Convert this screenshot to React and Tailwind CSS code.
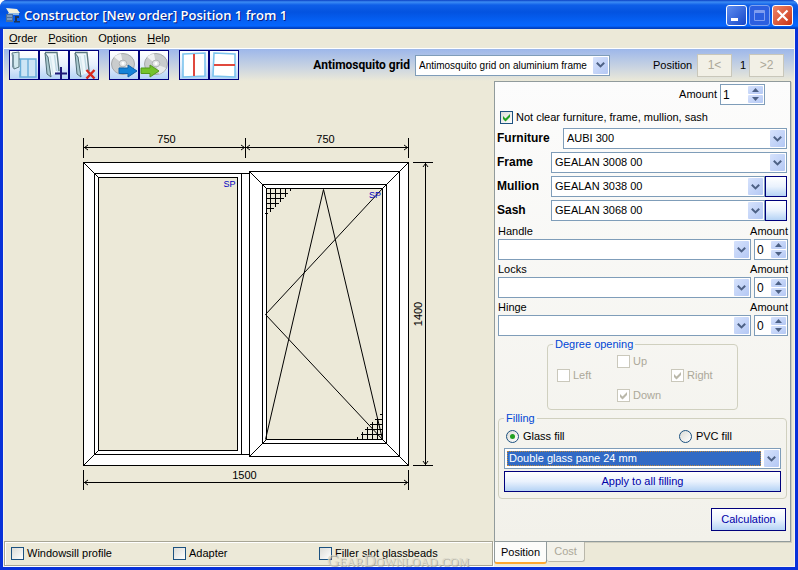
import React, { useId, useState } from "react";

const cx = (...parts) => parts.filter(Boolean).join(" ");

function Chevron({ className }) {
  return (
    <svg viewBox="0 0 9 6" className={cx("h-[6px] w-[9px]", className)} fill="none" stroke="#4d6185" strokeWidth="2">
      <path d="M0.8 0.8 L4.5 4.4 L8.2 0.8" />
    </svg>
  );
}

function Combo({ id, value, label, className, selected, small }) {
  return (
    <div className={cx("relative flex h-[21px] min-w-0 border border-[#7f9db9] bg-white", className)}>
      <select
        id={id}
        aria-label={label}
        defaultValue={value}
        className={cx(
          "min-w-0 flex-1 appearance-none overflow-hidden leading-[13px] outline-none",
          small ? "text-[10px]" : "text-[11px]",
          selected ? "my-[2px] mr-[19px] ml-[2px] border border-dotted border-[#c08a3c] bg-[#316ac5] pl-px text-white" : "mr-[17px] bg-white pl-[3px] text-black"
        )}
      >
        <option value={value}>{value}</option>
      </select>
      <span className="pointer-events-none absolute inset-y-px right-px flex w-[15px] items-center justify-center rounded-[1px] bg-gradient-to-br from-[#d6e2fc] to-[#b4c8f4]">
        <Chevron />
      </span>
    </div>
  );
}

function Spinner({ id, initial, className }) {
  const [n, setN] = useState(initial);
  const step = "flex h-[8px] w-[15px] items-center justify-center rounded-[1px] bg-gradient-to-br from-[#d6e2fc] to-[#b4c8f4]";
  return (
    <div className={cx("flex h-[21px] border border-[#7f9db9] bg-white p-px", className)}>
      <input
        id={id}
        value={n}
        inputMode="numeric"
        onChange={(e) => setN(Number(e.target.value) || 0)}
        className="w-0 min-w-0 flex-1 pl-px text-[12px] leading-[14px] outline-none"
      />
      <div className="flex flex-col gap-px">
        <button type="button" aria-label="Increase" className={step} onClick={() => setN(n + 1)}>
          <svg viewBox="0 0 7 4" className="h-[4px] w-[7px]" fill="#4d6185"><path d="M0 4 L3.5 0 L7 4Z" /></svg>
        </button>
        <button type="button" aria-label="Decrease" className={step} onClick={() => setN(Math.max(0, n - 1))}>
          <svg viewBox="0 0 7 4" className="h-[4px] w-[7px]" fill="#4d6185"><path d="M0 0 L3.5 4 L7 0Z" /></svg>
        </button>
      </div>
    </div>
  );
}

function Check({ label, checked, disabled, className }) {
  const [on, setOn] = useState(!!checked);
  return (
    <label className={cx("flex items-center gap-[3px]", disabled && "text-[#aca899]", className)}>
      <span className="relative flex h-[13px] w-[13px]">
        <input
          type="checkbox"
          checked={on}
          disabled={disabled}
          onChange={() => setOn(!on)}
          className={cx(
            "h-[13px] w-[13px] appearance-none border",
            disabled ? "border-[#cac8bb] bg-white" : "border-[#1c5180] bg-gradient-to-br from-[#dcdcd7] to-white"
          )}
        />
        {on && (
          <svg viewBox="0 0 13 13" className="pointer-events-none absolute inset-0" fill={disabled ? "#bab8aa" : "#21a121"}>
            <path d="M3 5 L5.5 7.5 L10 3 V6 L5.5 10.5 L3 8Z" />
          </svg>
        )}
      </span>
      {label}
    </label>
  );
}

function Radio({ label, checked }) {
  return (
    <label className="flex items-center gap-[4px]">
      <span className="relative flex h-[13px] w-[13px]">
        <input
          type="radio"
          name="filling"
          defaultChecked={checked}
          className="peer h-[13px] w-[13px] appearance-none rounded-full border border-[#1c5180] bg-gradient-to-br from-[#dcdcd7] to-white"
        />
        <span className="pointer-events-none absolute inset-[4px] hidden rounded-full bg-[#21a121] peer-checked:block" />
      </span>
      {label}
    </label>
  );
}

function BlueButton({ children, label, className }) {
  return (
    <button
      type="button"
      aria-label={label}
      className={cx("border border-[#00007c] bg-gradient-to-b from-white via-[#eaf2fd] to-[#b5d3f5] text-[#0000a8]", className)}
    >
      {children}
    </button>
  );
}

function ToolButton({ label, children }) {
  return (
    <button
      type="button"
      aria-label={label}
      className="h-[30px] w-[30px] border border-[#00007c] bg-gradient-to-b from-white via-[#e6effc] to-[#b5d3f5]"
    >
      <svg viewBox="0 0 28 28" className="h-[28px] w-[28px]" fill="none">{children}</svg>
    </button>
  );
}

function OpenSash() {
  return (
    <g>
      <path d="M5 2 H17 V22 L9 25Z" fill="#eef7fa" />
      <path d="M5 2 L8 6 L11 26 L7 23Z" fill="#a9c8cf" stroke="#4e6b74" />
      <path d="M5 1.5 H17 L19 20" stroke="#5d7a80" strokeWidth="1.4" />
      <path d="M14.5 4 L16.5 20" stroke="#bcd8e2" strokeWidth="1.4" />
      <path d="M10 5 L13 23" stroke="#d5e8ee" strokeWidth="1.4" />
    </g>
  );
}

function Disc({ x }) {
  return (
    <g>
      <ellipse cx={x} cy="13" rx="11.5" ry="10.5" fill="#c9cccd" stroke="#a5a9ab" />
      <path d={`M${x} 13 L${x - 9} 6 A11.5 10.5 0 0 1 ${x - 2} 2.7Z`} fill="#f1f2f2" />
      <path d={`M${x} 13 L${x + 10} 17 A11.5 10.5 0 0 1 ${x + 3} 23Z`} fill="#e8eaea" />
      <ellipse cx={x} cy="12.5" rx="3.8" ry="3.4" fill="#e3e5e6" stroke="#b0b3b5" />
      <circle cx={x} cy="12.5" r="1.4" fill="#fff" />
    </g>
  );
}

function Toolbar() {
  return (
    <div className="flex h-[32px] items-center bg-gradient-to-b from-[#9db7ea] to-[#ece9d8] pr-[10px] pl-[5px]">
      <div className="flex gap-[10px]">
        <div className="flex">
          <ToolButton label="Construction">
            <path d="M9 8 H26 V26 H10 V20" fill="#cde5f5" stroke="#68add8" strokeWidth="1.4" />
            <path d="M10.5 8 V26 M18 8 V26" stroke="#68add8" strokeWidth="1.4" />
            <path d="M2 2 L9 1 V16 L4 18Z" fill="#d3e9ef" stroke="#58777f" />
            <path d="M2 2 L4 4 V18 L2 16Z" fill="#7893a0" />
          </ToolButton>
          <ToolButton label="Add sash">
            <OpenSash />
            <path d="M21 16 V28 M15 22.5 H27" stroke="#1d1878" strokeWidth="2" />
          </ToolButton>
          <ToolButton label="Delete sash">
            <OpenSash />
            <path d="M16.5 19 L24.5 27.5 M24.5 19 L16.5 27.5" stroke="#d8281c" strokeWidth="2.4" />
          </ToolButton>
        </div>
        <div className="flex">
          <ToolButton label="Save to disc">
            <Disc x={13} />
            <path d="M9 17 H18 V14 L27 20 L18 26 V22.5 H9Z" fill="#1583d8" stroke="#0f62ac" />
          </ToolButton>
          <ToolButton label="Load from disc">
            <Disc x={16} />
            <path d="M1 17 H10 V14 L19 20 L10 26 V22.5 H1Z" fill="#74c32c" stroke="#54981c" />
          </ToolButton>
        </div>
        <div className="flex">
          <ToolButton label="Vertical mullion">
            <path d="M3 3 L25 2 V25 L3 26Z" fill="#fff" stroke="#7cc4ee" strokeWidth="1.6" />
            <path d="M14 3 V25" stroke="#e0483e" strokeWidth="2" />
          </ToolButton>
          <ToolButton label="Horizontal mullion">
            <path d="M4 2 L25 3 V26 L3 25Z" fill="#fff" stroke="#7cc4ee" strokeWidth="1.6" />
            <path d="M4 14 H25" stroke="#e0483e" strokeWidth="2" />
          </ToolButton>
        </div>
      </div>
      <label htmlFor="grid" className="ml-auto pr-[5px] font-['Roboto',sans-serif] text-[12px] font-bold">Antimosquito grid</label>
      <Combo id="grid" value="Antimosquito grid on aluminium frame" small className="w-[195px]" />
      <span className="ml-[43px] w-[44px]">Position</span>
      <button type="button" disabled className="h-[23px] w-[35px] border border-[#c9c7ba] bg-[#f2f0e6] text-[12px] text-[#aca899]">1&lt;</button>
      <span className="w-[17px] pr-[3px] text-right">1</span>
      <button type="button" disabled className="h-[23px] w-[35px] border border-[#c9c7ba] bg-[#f2f0e6] text-[12px] text-[#aca899]">&gt;2</button>
    </div>
  );
}

/* Elevation of the two-light window, in drawing units of one pixel. */
function Elevation() {
  return (
    <svg viewBox="61 126 375 371" className="h-[371px] w-[375px]" fill="none" stroke="#000" role="img" aria-label="Window elevation 1500 by 1400">
      <g shapeRendering="crispEdges">
        <rect x="83.5" y="162.5" width="325" height="303" fill="#fff" />
        <rect x="94.5" y="173.5" width="147" height="281" />
        <rect x="98.5" y="177.5" width="139" height="273" fill="#ece9d8" />
        <path d="M241.5 173.5 H249.5 M241.5 454.5 H249.5" />
        <rect x="249.5" y="171.5" width="150" height="285" fill="#fff" />
        <rect x="262.5" y="184.5" width="124" height="259" />
        <rect x="266.5" y="188.5" width="116" height="251" fill="#ece9d8" />
        <path d="M270.5 189 V212 M275.5 189 V207 M280.5 189 V202 M285.5 189 V197 M290.5 189 V191 M267 193.5 H288 M267 198.5 H284 M267 203.5 H279 M267 208.5 H274 M265 213.5 H268" />
        <path d="M377.5 439 V418 M372.5 439 V422 M367.5 439 V427 M362.5 439 V432 M357.5 439 V437 M382 434.5 H361 M382 429.5 H365 M382 424.5 H370 M382 419.5 H375 M382 414.5 H380" />
        <path d="M83.5 147.5 H408.5 M83.5 138 V158 M245.5 138 V158 M408.5 138 V158" />
        <path d="M83.5 482.5 H408.5 M83.5 470 V490 M408.5 470 V490" />
        <path d="M425.5 162.5 V465.5 M413 162.5 H433 M413 465.5 H433" />
      </g>
      <path d="M83.5 162.5 L98.5 177.5 M83.5 465.5 L98.5 450.5 M408.5 162.5 L382.5 188.5 L265.5 314.5 L382.5 439.5 L408.5 465.5 M249.5 171.5 L266.5 188.5 M249.5 456.5 L266.5 439.5" />
      <path d="M265.5 439.5 L323.5 189.5 L382.5 439.5" />
      <g>
        <path d="M88 145 L84.5 147.5 L88 150 M241 145 L244.5 147.5 L241 150 M250 145 L246.5 147.5 L250 150 M404 145 L407.5 147.5 L404 150" />
        <path d="M88 480 L84.5 482.5 L88 485 M404 480 L407.5 482.5 L404 485 M423 167 L425.5 163.5 L428 167 M423 461 L425.5 464.5 L428 461" />
      </g>
      <g fill="#000" stroke="none" fontSize="11" textAnchor="middle" fontFamily='"Liberation Sans", Arial, sans-serif'>
        <text x="166.5" y="143">750</text>
        <text x="325.5" y="143">750</text>
        <text x="244.5" y="479">1500</text>
        <text transform="translate(422 314) rotate(-90)">1400</text>
        <g fill="#0000c0" fontSize="9">
          <text x="229.5" y="187">SP</text>
          <text x="375" y="198">SP</text>
        </g>
      </g>
    </svg>
  );
}

function ProfileRow({ label, value, wide, extra }) {
  const id = useId();
  return (
    <div className="flex items-center">
      <label htmlFor={id} className={cx("pl-[2px] text-[12px] font-bold", wide ? "w-[68px]" : "w-[56px]")}>{label}</label>
      <Combo id={id} value={value} className="flex-1" />
      {extra && <BlueButton label={`Choose ${label}`} className="h-[21px] w-[22px]" />}
    </div>
  );
}

function HardwareRow({ label }) {
  const id = useId();
  return (
    <div>
      <div className="flex h-[17px] items-end justify-between pb-px">
        <label htmlFor={id}>{label}</label>
        <label htmlFor={`${id}n`}>Amount</label>
      </div>
      <div className="flex gap-[3px]">
        <Combo id={id} value="" className="flex-1" />
        <Spinner id={`${id}n`} initial={0} className="w-[34px]" />
      </div>
    </div>
  );
}

function SidePanel() {
  return (
    <div className="flex flex-1 flex-col border border-[#919b9c] bg-gradient-to-b from-[#fcfcfc] to-[#f2f1ea] pt-[2px] pb-[10px] shadow-[1px_1px_0_#d0cebf]">
      <div className="flex items-center justify-end gap-[3px] pr-[25px]">
        <label htmlFor="amount">Amount</label>
        <Spinner id="amount" initial={1} className="w-[45px]" />
      </div>
      <Check label="Not clear furniture, frame, mullion, sash" checked className="mt-[6px] ml-[5px]" />
      <div className="mt-[4px] flex flex-col gap-[3px] pr-[3px]">
        <ProfileRow label="Furniture" value="AUBI 300" wide />
        <ProfileRow label="Frame" value="GEALAN 3008 00" />
        <ProfileRow label="Mullion" value="GEALAN 3038 00" extra />
        <ProfileRow label="Sash" value="GEALAN 3068 00" extra />
      </div>
      <div className="mt-px pr-[2px] pl-[3px]">
        <HardwareRow label="Handle" />
        <HardwareRow label="Locks" />
        <HardwareRow label="Hinge" />
      </div>
      <fieldset className="mt-[2px] mr-[52px] ml-[52px] h-[72px] rounded-[4px] border border-[#d0d0bf] px-[9px]">
        <legend className="-ml-[4px] px-[2px] leading-[13px] text-[#0046d5]">Degree opening</legend>
        <div className="grid grid-cols-[60px_54px_1fr] gap-y-px pt-[4px]">
          <Check label="Up" disabled className="col-start-2" />
          <Check label="Left" disabled className="col-start-1 row-start-2" />
          <Check label="Right" checked disabled className="col-start-3 row-start-2" />
          <Check label="Down" checked disabled className="col-start-2 row-start-3 mt-[6px]" />
        </div>
      </fieldset>
      <fieldset className="mt-[2px] mr-[3px] ml-[3px] rounded-[4px] border border-[#d0d0bf] px-[5px] pb-[6px]">
        <legend className="px-[2px] leading-[13px] text-[#0046d5]">Filling</legend>
        <div className="flex items-center justify-between pt-[5px] pr-[49px] pb-[5px] pl-[2px]">
          <Radio label="Glass fill" checked />
          <Radio label="PVC fill" />
        </div>
        <Combo label="Filling type" value="Double glass pane 24 mm" selected />
        <BlueButton className="mt-[2px] h-[21px] w-full">Apply to all filling</BlueButton>
      </fieldset>
      <BlueButton className="mt-auto mr-[4px] h-[23px] w-[75px] self-end">Calculation</BlueButton>
    </div>
  );
}

function TitleBar() {
  const box = "flex h-[21px] w-[21px] items-center justify-center rounded-[3px] border border-white";
  return (
    <header className="flex h-[29px] items-center bg-[linear-gradient(to_bottom,#0a3fc4_0,#3c8cf4_2px,#0f5fe8_5px,#0353e0_12px,#0562f6_22px,#0566ff_26px,#0040c0_28px)] pt-px pr-[5px] pl-[5px]">
      <svg viewBox="0 0 16 16" className="h-[16px] w-[16px]">
        <path d="M1 1 L12 2 L15 6 L4 6Z" fill="#f5f1dc" />
        <path d="M3 6 H14 V8 H3Z" fill="#8fb7e0" />
        <path d="M1 7 H8 V15 H1Z" fill="#4d6f9a" />
        <path d="M2 9 H7 M2 12 H7" stroke="#a9c4e4" />
        <path d="M10 9 H14 V11 H12 V14 H15 V15.5 H9 V14 H10Z" fill="#1f3558" />
      </svg>
      <h1 className="pl-[3px] font-['Open_Sans','Noto_Sans',sans-serif] text-[13px] font-semibold text-white [text-shadow:1px_1px_0_#0a1e80]">
        Constructor [New order] Position 1 from 1
      </h1>
      <div className="ml-auto flex gap-[2px]">
        <button type="button" aria-label="Minimize" className={cx(box, "bg-gradient-to-br from-[#5f8df0] to-[#1746c8]")}>
          <svg viewBox="0 0 19 19" className="h-[19px] w-[19px]"><path d="M4 12 H11 V15 H4Z" fill="#fff" /></svg>
        </button>
        <button type="button" aria-label="Maximize" disabled className="flex h-[21px] w-[21px] items-center justify-center rounded-[3px] border border-[#7fa2ee] bg-[#2c5fe0]">
          <svg viewBox="0 0 19 19" className="h-[19px] w-[19px]" fill="none" stroke="#7f9df0"><path d="M4.5 4.5 H14.5 V14.5 H4.5Z M4.5 5.5 H14.5 M4.5 6.5 H14.5" /></svg>
        </button>
        <button type="button" aria-label="Close" className={cx(box, "bg-gradient-to-br from-[#ee8466] to-[#c9300e]")}>
          <svg viewBox="0 0 19 19" className="h-[19px] w-[19px]" stroke="#fff" strokeWidth="2.2"><path d="M4.5 4.5 L14.5 14.5 M14.5 4.5 L4.5 14.5" /></svg>
        </button>
      </div>
    </header>
  );
}

export default function App() {
  return (
    <div className="relative flex min-h-screen flex-col overflow-hidden rounded-t-[7px] bg-[#0831d9] font-['Liberation_Sans',Arial,sans-serif] text-[11px] leading-[13px] text-black">
      <TitleBar />
      <div className="mx-[3px] mb-[3px] flex flex-1 flex-col border border-t-0 border-[#f6f4ec] bg-[#ece9d8]">
        <nav className="flex h-[20px] items-center gap-[11px] border-b border-white pb-px pl-[5px]">
          <button type="button"><u>O</u>rder</button>
          <button type="button"><u>P</u>osition</button>
          <button type="button">Op<u>t</u>ions</button>
          <button type="button"><u>H</u>elp</button>
        </nav>
        <Toolbar />
        <div className="flex flex-1">
          <main className="flex min-w-0 flex-1 flex-col">
            <div className="flex flex-1 items-center justify-center pr-px">
              <Elevation />
            </div>
            <div className="mr-px flex h-[25px] items-center border border-[#a7a595] pl-[6px] shadow-[inset_1px_1px_0_#fff,1px_1px_0_#fff]">
              <Check label="Windowsill profile" className="w-[162px]" />
              <Check label="Adapter" className="w-[146px]" />
              <Check label="Filler slot glassbeads" />
            </div>
          </main>
          <aside className="flex w-[300px] flex-col pr-[3px]">
            <SidePanel />
            <div role="tablist" className="flex h-[24px] items-start">
              <button type="button" role="tab" aria-selected="true" className="h-[22px] w-[53px] rounded-b-[3px] border-x border-b-2 border-x-[#919b9c] border-b-[#ffa830] bg-[#fcfcfa]">Position</button>
              <button type="button" role="tab" aria-selected="false" disabled className="h-[20px] w-[38px] rounded-b-[3px] border border-t-0 border-l-0 border-[#b9b7aa] bg-[#f3f2ea] text-[#aca899]">Cost</button>
            </div>
          </aside>
        </div>
      </div>
      <div className="pointer-events-none absolute bottom-0 left-[327px] font-['Liberation_Serif',serif] text-[17px] leading-[18px] text-[#d8d6ca] opacity-80 [font-variant:small-caps] [text-shadow:1px_1px_0_#a3a196]">
        GearDownload.com
      </div>
    </div>
  );
}
